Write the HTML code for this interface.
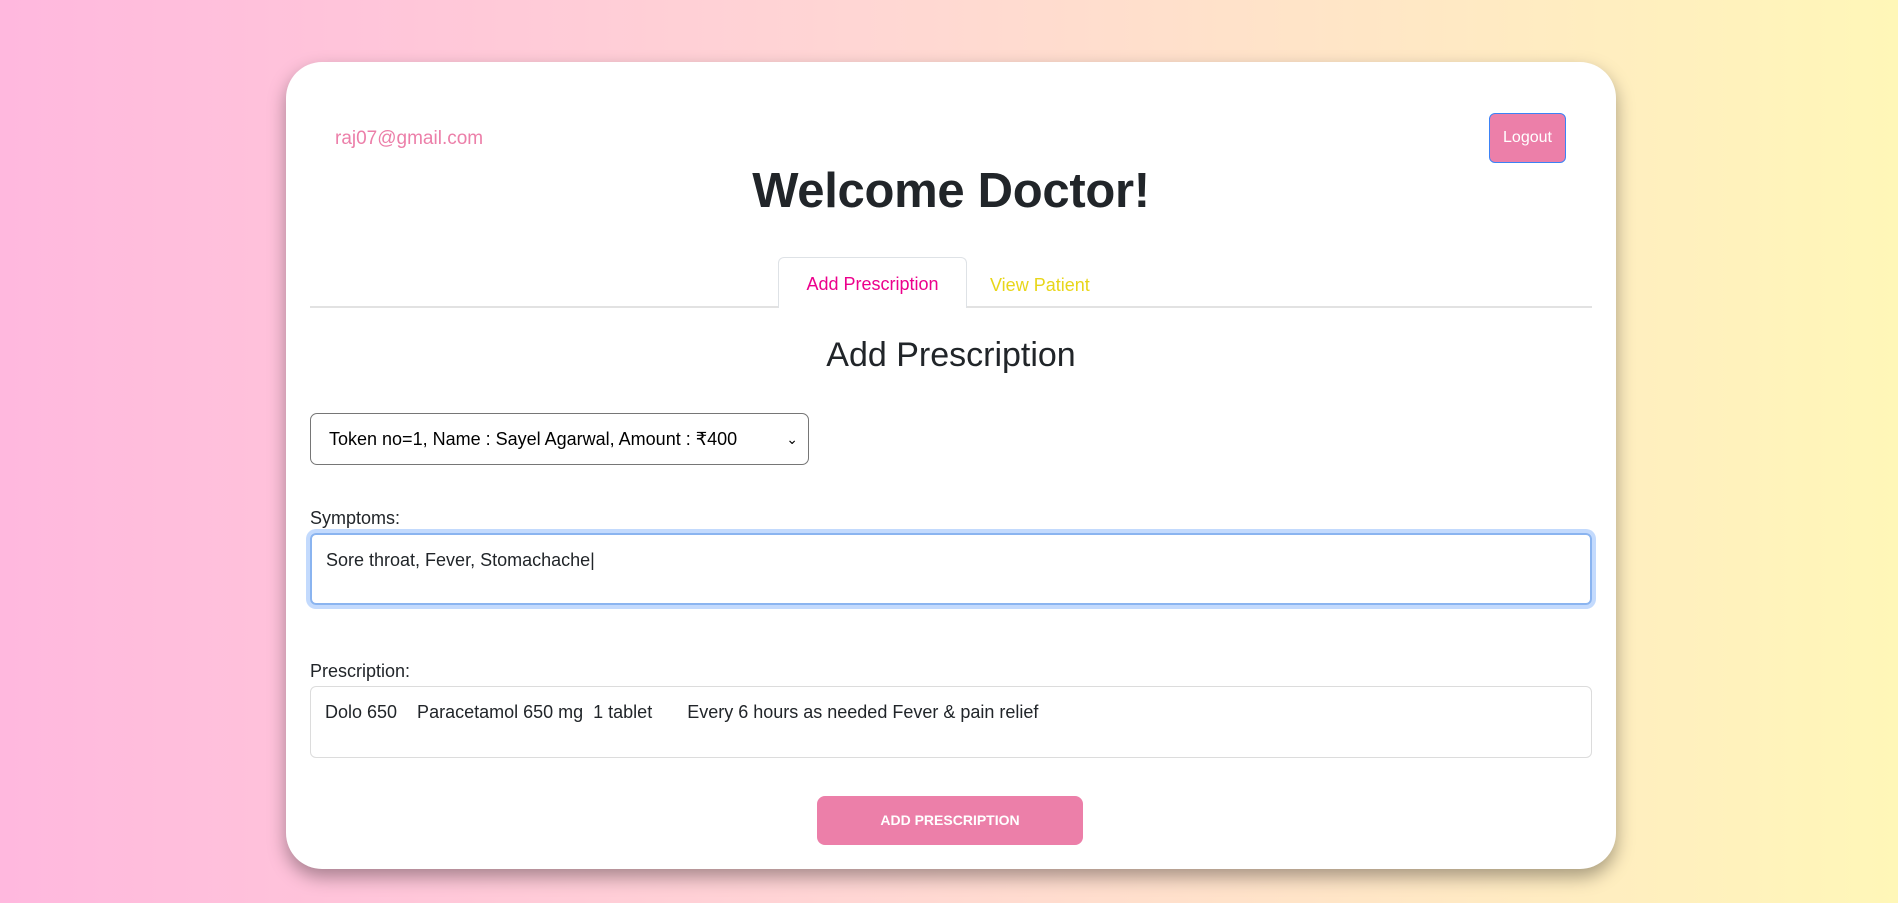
<!DOCTYPE html>
<html><head><style>
*{box-sizing:border-box;margin:0;padding:0}
body{width:1898px;height:903px;overflow:hidden;font-family:"Liberation Sans",sans-serif;background:linear-gradient(90deg,#ffb8de 0%,#ffd6d4 45%,#fff7b8 100%);position:relative;color:#212529}
.card{position:absolute;left:286px;top:62px;width:1330px;height:807px;background:#fff;border-radius:36px;box-shadow:0 8px 18px rgba(0,0,0,.35)}
.abs{position:absolute}
.email{left:49px;top:66px;font-size:19px;color:#ec7fa9}
.logout{left:1203px;top:51px;width:77px;height:50px;background:#ec7fa9;border:1.5px solid #3b82f6;border-radius:6px;color:#fff;font-size:16px;text-align:center;line-height:47px}
h1{position:absolute;left:0;width:1330px;top:101px;text-align:center;font-size:49px;font-weight:bold;color:#212529;letter-spacing:-0.3px}
.line{left:24px;top:244px;width:1282px;height:2px;background:#e2e2e2}
.tab{left:492px;top:195px;width:189px;height:51px;border:1px solid #dee2e6;border-bottom:none;border-radius:6px 6px 0 0;background:#fff;color:#ec008c;font-size:18px;text-align:center;line-height:52px}
.tab2{left:704px;top:197px;color:#e8d61a;font-size:18px;line-height:52px}
h2{position:absolute;left:0;width:1330px;top:274px;text-align:center;font-weight:normal;font-size:34px}
.sel{left:24px;top:351px;width:499px;height:52px;border:1px solid #767676;border-radius:7px;font-size:18px;line-height:50px;padding-left:18px;color:#000}
.lbl{left:24px;font-size:18px}
.ta{left:24px;width:1282px;border-radius:6px;font-size:18px;padding:15px 14px;color:#212529}
.btn{left:531px;top:734px;width:266px;height:49px;background:#ec7fa9;border-radius:8px;color:#fff;font-weight:bold;font-size:14px;text-align:center;line-height:49px}
</style></head><body>
<div class="card">
<div class="abs email">raj07@gmail.com</div>
<div class="abs logout">Logout</div>
<h1>Welcome Doctor!</h1>
<div class="abs line"></div>
<div class="abs tab">Add Prescription</div>
<div class="abs tab2">View Patient</div>
<h2>Add Prescription</h2>
<div class="abs sel">Token no=1, Name : Sayel Agarwal, Amount : ₹400 <span style="position:absolute;right:10px;font-size:14px">⌄</span></div>
<div class="abs lbl" style="top:446px">Symptoms:</div>
<div class="abs ta" style="top:471px;height:72px;border:2px solid #8ab4f0;box-shadow:0 0 0 4px #c3dafd">Sore throat, Fever, Stomachache|</div>
<div class="abs lbl" style="top:599px">Prescription:</div>
<div class="abs ta" style="top:624px;height:72px;border:1px solid #dcdcdc">Dolo 650&nbsp;&nbsp;&nbsp; Paracetamol 650 mg&nbsp; 1 tablet&nbsp;&nbsp;&nbsp;&nbsp;&nbsp;&nbsp; Every 6 hours as needed Fever &amp; pain relief</div>
<div class="abs btn">ADD PRESCRIPTION</div>
</div>
</body></html>
